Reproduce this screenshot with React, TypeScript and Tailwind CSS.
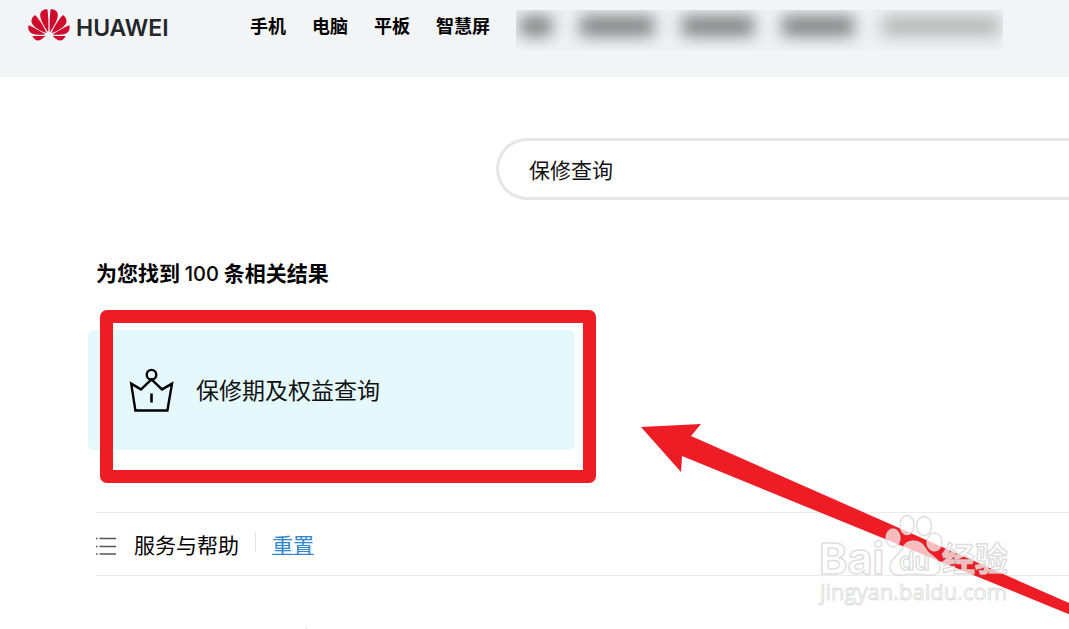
import React, { useState } from 'react';

const petals = [
  'M20.2 23.4C20.6 17 20.4 7 19.4 0.3C15.6 0.2 12.6 2 12.2 5.6C12 10.6 16.4 18 20.2 23.4Z',
  'M18.6 24.2C16.2 18.4 11.6 10.4 7 6C4.4 7.6 3 10.4 3.6 13.4C4.8 17.6 12 21.8 18.6 24.2Z',
  'M17.6 25.6C12.4 22.2 5.6 18.2 0.6 16.2C-0.2 19.4 0.6 22.6 3.4 24.2C6.8 26 13 26 17.6 25.6Z',
  'M17.4 27H4.4C5.6 29.6 7.8 31.8 10.2 31.6C12.8 31.2 15.6 28.8 17.4 27Z',
];

const HuaweiLogo: React.FC = () => (
  <a href="#" className="flex shrink-0 items-start gap-[6px]" aria-label="HUAWEI">
    <svg className="h-8 w-[42px]" viewBox="0 0 42 32" fill="#cf0a2c" aria-hidden="true">
      {petals.map(d => (
        <path key={d} d={d} />
      ))}
      <g transform="matrix(-1 0 0 1 42 0)">
        {petals.map(d => (
          <path key={d} d={d} />
        ))}
      </g>
    </svg>
    <span className="w-[94px] pt-[3px] font-['Inter',sans-serif] text-[23px] leading-8 font-semibold text-[#23272b]">HUAWEI</span>
  </a>
);

const CrownIcon: React.FC = () => (
  <svg className="h-12 w-12 shrink-0" viewBox="0 0 48 48" fill="none" stroke="#000" strokeWidth={2.4} aria-hidden="true">
    <circle cx="23.5" cy="8.7" r="4.8" />
    <path d="M3.2 17.6L7.4 44.5H39.4L44 17.6L34 23.4L23.5 13.5L13 23.4Z" />
    <path d="M23.5 27.5V36.5" strokeWidth={2.6} />
  </svg>
);

const ListIcon: React.FC = () => (
  <svg className="h-5 w-5" viewBox="0 0 20 20" stroke="#555" strokeWidth={1.3} aria-hidden="true">
    <path d="M0 2.5H1.6M3.5 2.5H20M0 10.5H1.6M3.5 10.5H20M0 18H1.6M3.5 18H20" />
  </svg>
);

const navItems = ['手机', '电脑', '平板', '智慧屏'];

const Header: React.FC = () => (
  <header className="flex h-[77px] items-start bg-[#f2f4f6] pt-[9px] pl-7">
    <HuaweiLogo />
    <nav className="ml-20 flex items-center gap-[26px] pt-0.5">
      {navItems.map(item => (
        <a key={item} href="#" className="text-[18px] leading-7 font-bold whitespace-nowrap">
          {item}
        </a>
      ))}
    </nav>
    {/* Obscured menu entries */}
    <div className="mt-px ml-[26px] h-10 w-[487px] shrink-0 overflow-hidden bg-[#eff1f2]" aria-hidden="true">
      <div className="flex gap-7 pt-1.5 pl-1 blur-[8px]">
        <div className="h-5 w-8 bg-[#808282]" />
        <div className="h-5 w-[74px] bg-[#808282]" />
        <div className="h-5 w-[72px] bg-[#808282]" />
        <div className="h-5 w-[72px] bg-[#808282]" />
        <div className="h-5 w-[118px] bg-[#b6b7b7]" />
      </div>
    </div>
  </header>
);

const Arrow: React.FC = () => (
  <svg className="pointer-events-none absolute top-[424px] left-[641px] h-[192px] w-[430px]" viewBox="0 0 430 192" aria-hidden="true">
    <path d="M0 3L60 0L50 12L430 180V191L41 32L40 48Z" fill="#ee1c24" />
  </svg>
);

const Watermark: React.FC = () => (
  <svg
    className="pointer-events-none absolute top-[510px] left-[815px] h-[105px] w-[205px]"
    viewBox="0 0 205 105"
    fill="#fff"
    fillOpacity={0.7}
    stroke="#d6d6d6"
    strokeOpacity={0.8}
    strokeWidth={1.5}
    strokeLinejoin="round"
    role="img"
    aria-label="Baidu 经验"
  >
    <ellipse cx="92" cy="15" rx="7" ry="9.5" />
    <ellipse cx="109" cy="16" rx="7.5" ry="9.5" />
    <ellipse cx="78" cy="28" rx="7" ry="9" />
    <ellipse cx="119.5" cy="32" rx="7.5" ry="9" />
    <path d="M98 31C90 31 88 38 84 43C78 49 74 53 75 58C76 64 81 66 87 65C94 64 102 64 110 65C118 66 125 65 125 57C125 49 116 46 112 41C108 35 106 31 98 31Z" />
    <text x="4" y="64" fontSize="43" fontWeight="700" fontFamily="Inter, sans-serif">Bai</text>
    <text x="84" y="60" fontSize="25" fontWeight="600" fontFamily="Inter, sans-serif">du</text>
    <text x="127" y="61" fontSize="33" fontWeight="700" fontFamily="'Noto Sans CJK SC', sans-serif">经验</text>
    <text x="5" y="90" fontSize="22" fontWeight="500" fontFamily="'Open Sans', sans-serif" strokeWidth={1}>jingyan.baidu.com</text>
  </svg>
);

const App: React.FC = () => {
  const [query, setQuery] = useState('保修查询');

  return (
    <div className="relative min-h-screen overflow-hidden bg-white font-['Noto_Sans_CJK_SC',sans-serif] text-black">
      <Header />

      <main>
        <form className="mt-[61px] ml-[496px]" onSubmit={e => e.preventDefault()}>
          <input
            type="text"
            aria-label="搜索"
            value={query}
            onChange={e => setQuery(e.target.value)}
            className="block h-[62px] w-full rounded-l-full border-[3px] border-r-0 border-[#e6e6e6] bg-white pl-[30px] text-[21px] text-[#111] outline-none"
          />
        </form>

        <h1 className="mt-14 ml-24 text-[21px] leading-8 font-bold">
          为您找到 <span className="font-['Inter',sans-serif] text-[20px] font-medium">100</span> 条相关结果
        </h1>

        <div className="relative mt-10 ml-[88px] w-[487px]">
          <a href="#" className="flex h-[120px] items-center gap-5 rounded-md bg-[#e5f9fd] pl-10">
            <CrownIcon />
            <span className="pb-0.5 text-[23px] leading-8 text-[#111]">保修期及权益查询</span>
          </a>
          {/* Highlight frame */}
          <div className="pointer-events-none absolute -top-5 left-3 h-[173px] w-[496px] rounded-[7px] border-[13px] border-[#ee1c24]" />
        </div>

        <div className="mt-[62px] ml-24 flex h-16 items-center border-y border-[#ebebeb]">
          <span className="pt-1">
            <ListIcon />
          </span>
          <span className="ml-[18px] text-[21px] leading-8">服务与帮助</span>
          <span className="mx-4 mb-1 h-5 w-px bg-[#e2e2e2]" />
          <a href="#" className="text-[21px] leading-8 text-[#2f86d1] underline decoration-1 underline-offset-1">重置</a>
        </div>
        <div className="mt-[50px] ml-[306px] h-[3px] w-px bg-[#e2e2e2]" />
      </main>

      <Arrow />
      <Watermark />
    </div>
  );
};

export default App;
